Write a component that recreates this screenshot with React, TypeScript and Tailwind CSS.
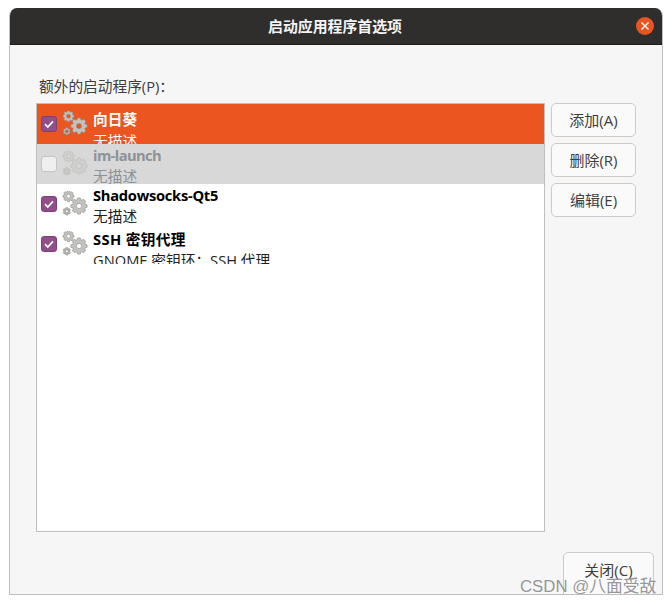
import React from 'react'

const uiFont = 'font-["Open_Sans","Noto_Sans_CJK_SC",sans-serif]'

// gear outline with a round hole in the middle
const gearPath = (
  cx: number,
  cy: number,
  outer: number,
  inner: number,
  hole: number,
  teeth: number,
  phase = 0
) => {
  const pts: string[] = []
  const step = (Math.PI * 2) / teeth
  for (let i = 0; i < teeth; i++) {
    const a = i * step + phase
    const corners = [
      [inner, a - step * 0.42],
      [outer, a - step * 0.2],
      [outer, a + step * 0.2],
      [inner, a + step * 0.42],
    ]
    corners.forEach(([r, t]) => {
      pts.push(`${(cx + r * Math.cos(t)).toFixed(2)} ${(cy + r * Math.sin(t)).toFixed(2)}`)
    })
  }
  const ring = `M${cx - hole} ${cy}a${hole} ${hole} 0 1 0 ${hole * 2} 0a${hole} ${hole} 0 1 0 ${-hole * 2} 0Z`
  return `M${pts.join('L')}Z${ring}`
}

const Gears = ({ faded }: { faded?: boolean }) => (
  <svg
    width="27"
    height="26"
    viewBox="0 0 27 26"
    className={`shrink-0 ${faded ? 'opacity-40' : ''}`}
  >
    <path
      d={gearPath(6.5, 5.2, 5.6, 4.4, 2, 8)}
      fill="#c2c2bf"
      stroke="#8f8f8c"
      strokeWidth="0.6"
      fillRule="evenodd"
    />
    <path
      d={gearPath(17, 15, 8.2, 6.4, 2.6, 8)}
      fill="#c2c2bf"
      stroke="#8f8f8c"
      strokeWidth="0.6"
      fillRule="evenodd"
    />
    <path
      d={gearPath(4.8, 20.3, 3.8, 3, 1.4, 6, 0.5)}
      fill="#b3b3b0"
      stroke="#858582"
      strokeWidth="0.5"
      fillRule="evenodd"
    />
  </svg>
)

const Checkbox = ({ checked }: { checked: boolean }) =>
  checked ? (
    <span className="flex h-4 w-4 shrink-0 items-center justify-center rounded-[3px] border border-[#7c4176] bg-[#924d8b]">
      <svg width="12" height="12" viewBox="0 0 12 12" fill="none">
        <path d="M2 6.2 4.8 9 10 3.4" stroke="#fff" strokeWidth="1.7" />
      </svg>
    </span>
  ) : (
    <span className="h-4 w-4 shrink-0 rounded-[3px] border border-[#c4c4c4] bg-[#efefef]" />
  )

const rows = [
  {
    name: '向日葵',
    desc: '无描述',
    checked: true,
    top: 'pt-[5px]',
    gap: 'mt-[2px]',
    row: 'bg-[#eb5520] text-white',
    descColor: 'text-white',
    nameClass: 'tracking-[0.1px]',
  },
  {
    name: 'im-launch',
    desc: '无描述',
    checked: false,
    faded: true,
    top: 'pt-[1px]',
    gap: 'mt-[1px]',
    row: 'bg-[#d8d8d8] text-[#8d9297]',
    descColor: 'text-[#8d9297]',
    nameClass: 'tracking-[-0.6px]',
  },
  {
    name: 'Shadowsocks-Qt5',
    desc: '无描述',
    checked: true,
    top: 'pt-[1px]',
    gap: 'mt-[1px]',
    row: 'text-black',
    descColor: 'text-[#1f1f1f]',
    nameClass: 'tracking-[-0.27px]',
  },
  {
    name: 'SSH 密钥代理',
    desc: 'GNOME 密钥环：SSH 代理',
    checked: true,
    top: 'pt-[5px]',
    gap: 'mt-[1px]',
    row: 'text-black',
    descColor: 'text-[#1f1f1f]',
    nameClass: 'tracking-[0.35px]',
  },
]

const sideButtons = ['添加(A)', '删除(R)', '编辑(E)']

export default function App() {
  return (
    <div className={`relative h-[604px] w-[672px] bg-white pl-[9px] pt-2 ${uiFont}`}>
      <div className="flex h-[587px] w-[654px] flex-col overflow-hidden rounded-t-[8px] border-x border-b border-[#bfbfbf] bg-[#f6f6f6]">
        <div className="relative flex h-[37px] shrink-0 items-center justify-center border-b border-[#1c1b1a] bg-[#2f2e2d]">
          <span className="-ml-[2px] text-[14.9px] font-bold text-[#f4f4f4]">启动应用程序首选项</span>
          <span className="absolute right-[8px] top-[9px] flex h-[18px] w-[18px] items-center justify-center rounded-full bg-[#e95420]">
            <svg width="10" height="10" viewBox="0 0 10 10">
              <path d="M1.5 1.5 8.5 8.5M8.5 1.5 1.5 8.5" stroke="#fff" strokeWidth="1.4" />
            </svg>
          </span>
        </div>

        <div className="flex flex-col pl-[26px] pt-[31px]">
          <div className="pl-[3px] text-[14.7px] leading-5 text-[#3d3d3d]">额外的启动程序(P)：</div>

          <div className="mt-[7px] flex gap-[6px]">
            <div className="h-[429px] w-[509px] border border-[#bfbfbf] bg-white">
              {rows.map((r) => (
                <div
                  key={r.name}
                  className={`flex h-10 items-center overflow-hidden pl-[4px] ${r.row}`}
                >
                  <Checkbox checked={r.checked} />
                  <div className="ml-[5px]">
                    <Gears faded={r.faded} />
                  </div>
                  <div className={`ml-[4px] h-10 overflow-hidden text-[14.7px] leading-5 ${r.top}`}>
                    <div className={`font-bold ${r.nameClass}`}>{r.name}</div>
                    <div className={`${r.gap} ${r.descColor}`}>{r.desc}</div>
                  </div>
                </div>
              ))}
            </div>

            <div className="flex flex-col gap-[6px]">
              {sideButtons.map((label) => (
                <button
                  key={label}
                  className="h-[34px] w-[85px] rounded-[5px] border border-[#cfcac5] bg-[#fafafa] text-[15px] text-[#3d3d3d]"
                >
                  {label}
                </button>
              ))}
            </div>
          </div>

          <div className="mt-5 flex justify-end pr-[8px]">
            <button className="h-[46px] w-[91px] rounded-[5px] border border-[#cfcac5] bg-[#fafafa] pb-[10px] text-[15px] text-[#3d3d3d]">
              关闭(C)
            </button>
          </div>
        </div>
      </div>

      <span className='absolute left-[520px] top-[577px] font-["Liberation_Sans","Noto_Sans_CJK_SC",sans-serif] text-[16.8px] leading-5 text-[#8a8a8a]/90'>
        CSDN @八面受敌
      </span>
    </div>
  )
}
